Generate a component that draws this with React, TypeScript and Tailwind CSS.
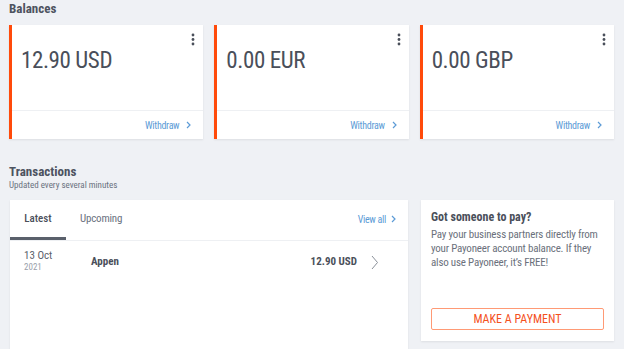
import React from "react";

const font = { fontFamily: "Roboto, 'Noto Sans', sans-serif" };

function Dots() {
  return (
    <svg width="4" height="13" viewBox="0 0 4 13" className="absolute right-[8px] top-[8px]">
      <circle cx="2" cy="2" r="1.4" fill="#4a4f5a" />
      <circle cx="2" cy="6.5" r="1.4" fill="#4a4f5a" />
      <circle cx="2" cy="11" r="1.4" fill="#4a4f5a" />
    </svg>
  );
}

function Chev({ className = "" }: { className?: string }) {
  return (
    <svg width="5" height="8" viewBox="0 0 5 8" className={className}>
      <path d="M1 1 L4 4 L1 7" fill="none" stroke="#5c9bd6" strokeWidth="1.2" />
    </svg>
  );
}

function BalanceCard({ amount }: { amount: string }) {
  return (
    <div className="relative h-[114px] bg-white border-l-[3px] border-[#ff4a0a] shadow-[0_1px_2px_rgba(0,0,0,0.08)] flex flex-col">
      <Dots />
      <div className="h-[86px] pl-[9px] pt-[22px] border-b border-[#eef0f3]">
        <div className="text-[23px] leading-[28px] text-[#4a4f5a] tracking-[-0.4px]">{amount}</div>
      </div>
      <div className="flex-1 flex items-center justify-end pr-[12px] gap-[7px]">
        <span className="text-[10px] text-[#5c9bd6] tracking-[-0.3px]">Withdraw</span>
        <Chev />
      </div>
    </div>
  );
}

export default function App() {
  return (
    <div style={font} className="w-[624px] h-[349px] overflow-hidden bg-[#eff1f5] pl-[9px] pr-[10px] [font-stretch:85%]">
      <div className="pt-[1px] h-[25px] text-[13px] leading-[16px] font-bold text-[#4d5360]">Balances</div>
      <div className="grid grid-cols-3 gap-[11px]">
        <BalanceCard amount="12.90 USD" />
        <BalanceCard amount="0.00 EUR" />
        <BalanceCard amount="0.00 GBP" />
      </div>
      <div className="mt-[25px] text-[13px] leading-[16px] font-bold text-[#4d5360]">Transactions</div>
      <div className="text-[9px] leading-[11px] text-[#6b7280]">Updated every several minutes</div>
      <div className="mt-[9px] flex gap-[13px] pl-[1px]">
        <div className="w-[398px] h-[160px] bg-white shadow-[0_1px_2px_rgba(0,0,0,0.08)]">
          <div className="h-[41px] flex items-stretch border-b border-[#eef0f3]">
            <div className="w-[56px] flex items-center justify-center border-b-[3px] border-[#5a606b] text-[11px] font-medium text-[#4a4f5a] pt-[1px]">
              Latest
            </div>
            <div className="ml-[14px] flex items-center text-[11px] text-[#6b7280] pb-[2px] tracking-[-0.2px]">Upcoming</div>
            <div className="ml-auto mr-[12px] flex items-center gap-[5px] pb-[2px]">
              <span className="text-[10px] text-[#5c9bd6] tracking-[-0.3px]">View all</span>
              <Chev />
            </div>
          </div>
          <div className="flex items-start pt-[8px]">
            <div className="ml-[14px] w-[67px]">
              <div className="text-[11px] leading-[13px] text-[#5a606b]">13 Oct</div>
              <div className="text-[9px] leading-[11px] text-[#9aa0aa]">2021</div>
            </div>
            <div className="mt-[6px] text-[11px] leading-[14px] font-bold text-[#4a4f5a]">Appen</div>
            <div className="ml-auto mt-[6px] text-[11px] leading-[14px] font-bold text-[#4a4f5a]">12.90 USD</div>
            <svg width="8" height="15" viewBox="0 0 8 15" className="ml-[14px] mr-[29px] mt-[6px]">
              <path d="M1 1 L6.5 7.5 L1 14" fill="none" stroke="#8a9099" strokeWidth="1" />
            </svg>
          </div>
        </div>
        <div className="w-[193px] h-[141px] bg-white shadow-[0_1px_2px_rgba(0,0,0,0.08)] px-[10px] pt-[10px] flex flex-col">
          <div className="text-[12px] leading-[15px] font-bold text-[#4a4f5a]">Got someone to pay?</div>
          <div className="mt-[3px] pr-[2px] text-[11px] leading-[14px] text-[#6b717c] tracking-[-0.2px]">
            Pay your business partners directly from your Payoneer account balance. If they also use Payoneer, it’s FREE!
          </div>
          <div className="mt-auto mb-[11px] h-[22px] border border-[#ff9a75] rounded-[2px] flex items-center justify-center text-[12px] text-[#f4511e]">
            MAKE A PAYMENT
          </div>
        </div>
      </div>
    </div>
  );
}
